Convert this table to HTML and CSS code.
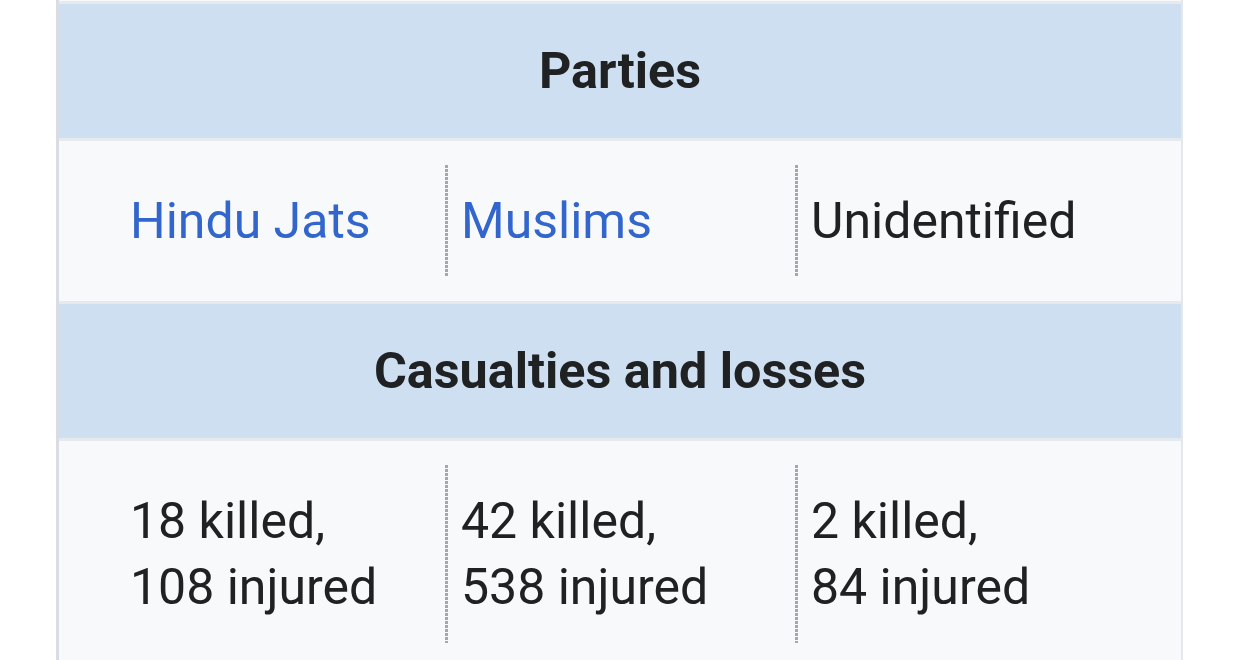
FILE: index.html
```html
<!DOCTYPE html>
<html lang="en">
<head>
<meta charset="utf-8">
<title>Infobox</title>
<link rel="stylesheet" href="styles.css">
</head>
<body>
<div class="infobox">
  <div class="prev"></div>
  <div class="header">Parties</div>
  <div class="row">
    <div class="cell first"><a href="#">Hindu Jats</a></div>
    <div class="cell"><a href="#">Muslims</a></div>
    <div class="cell">Unidentified</div>
  </div>
  <div class="header">Casualties and losses</div>
  <div class="row">
    <div class="cell first">18 killed,<br>108 injured</div>
    <div class="cell">42 killed,<br>538 injured</div>
    <div class="cell">2 killed,<br>84 injured</div>
  </div>
</div>
</body>
</html>
```

FILE: styles.css
```css
html, body {
  margin: 0;
  padding: 0;
  background: #ffffff;
}
body {
  font-family: Roboto, "Noto Sans", sans-serif;
  color: #202122;
  height: 660px;
  overflow: hidden;
}
.infobox {
  margin-left: 56px;
  width: 1122px;
  border-left: 3px solid #d9dde3;
  border-right: 2px solid #e4e7eb;
  display: flex;
  flex-direction: column;
  gap: 3px;
  background: #e6e9ed;
}
.prev {
  height: 1px;
  background: #f8f9fa;
}
.header {
  background: #cedff1;
  font-weight: 700;
  font-size: 50.3px;
  line-height: 66px;
  text-align: center;
  padding: 34px 0;
}
.row {
  background: #f8f9fa;
  display: flex;
  padding: 24px 0;
  font-size: 50px;
  line-height: 66px;
}
.cell {
  box-sizing: border-box;
  width: 350px;
  flex: none;
  padding: 23px 0 23px 16px;
  background-image: linear-gradient(to bottom, #a2a8b0 65%, transparent 65%);
  background-size: 3px 4px;
  background-repeat: repeat-y;
  background-position: left top;
}
.cell.first {
  width: 386px;
  padding-left: 71px;
  background-image: none;
}
.cell:last-child {
  flex: 1;
}
a {
  color: #3366cc;
  text-decoration: none;
}
```
